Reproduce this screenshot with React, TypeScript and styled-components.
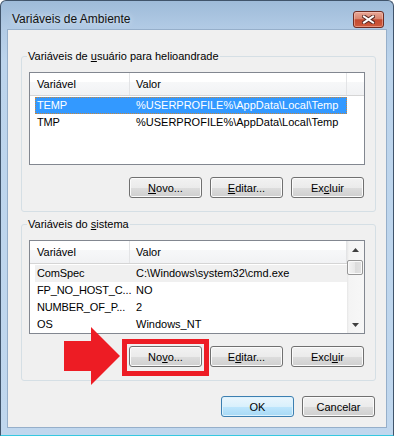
import styled, { createGlobalStyle } from "styled-components";

const GlobalStyle = createGlobalStyle`
  html, body {
    margin: 0;
    padding: 0;
    background: #ffffff;
  }
  body {
    font-family: "Liberation Sans", Arial, sans-serif;
    font-size: 11px;
    color: #000;
  }
  * {
    box-sizing: border-box;
  }
`;

type Row = { name: string; value: string; state?: "focused" | "selected" };

const userVars: Row[] = [
  { name: "TEMP", value: "%USERPROFILE%\\AppData\\Local\\Temp", state: "focused" },
  { name: "TMP", value: "%USERPROFILE%\\AppData\\Local\\Temp" },
];

const systemVars: Row[] = [
  { name: "ComSpec", value: "C:\\Windows\\system32\\cmd.exe", state: "selected" },
  { name: "FP_NO_HOST_C...", value: "NO" },
  { name: "NUMBER_OF_P...", value: "2" },
  { name: "OS", value: "Windows_NT" },
];

const App = () => {
  return (
    <Page>
      <GlobalStyle />
      <Window>
        <TitleBar>
          <Caption>Variáveis de Ambiente</Caption>
          <CloseButton>
            <svg width="13" height="9" viewBox="0 0 13 9">
              <path d="M2 1.5 L11 7.5 M11 1.5 L2 7.5" stroke="#5a2a24" strokeWidth="4" strokeLinecap="square" />
              <path d="M2 1.5 L11 7.5 M11 1.5 L2 7.5" stroke="#ffffff" strokeWidth="2" strokeLinecap="square" />
            </svg>
          </CloseButton>
        </TitleBar>
        <Client>
          <GroupBox $top={19}>
            <Legend>
              Variáveis de <Key>u</Key>suário para helioandrade
            </Legend>
            <ListView $height={93}>
              <ListBody>
                <HeaderRow>
                  <HeaderCell>Variável</HeaderCell>
                  <HeaderCell>Valor</HeaderCell>
                  <HeaderFiller />
                </HeaderRow>
                {userVars.map((r) => (
                  <ItemRow key={r.name} $state={r.state}>
                    <NameCell>{r.name}</NameCell>
                    <ValueCell>{r.value}</ValueCell>
                  </ItemRow>
                ))}
              </ListBody>
            </ListView>
            <ButtonRow>
              <Button>
                <Key>N</Key>ovo...
              </Button>
              <Button>
                <Key>E</Key>ditar...
              </Button>
              <Button>
                Ex<Key>c</Key>luir
              </Button>
            </ButtonRow>
          </GroupBox>

          <GroupBox $top={5}>
            <Legend>
              Variáveis do <Key>s</Key>istema
            </Legend>
            <ListView $height={94}>
              <ListBody>
                <HeaderRow>
                  <HeaderCell>Variável</HeaderCell>
                  <HeaderCell>Valor</HeaderCell>
                </HeaderRow>
                {systemVars.map((r) => (
                  <ItemRow key={r.name} $state={r.state}>
                    <NameCell>{r.name}</NameCell>
                    <ValueCell>{r.value}</ValueCell>
                  </ItemRow>
                ))}
              </ListBody>
              <ScrollBar>
                <ArrowButton>
                  <svg width="7" height="4" viewBox="0 0 7 4">
                    <path d="M0 4 L3.5 0 L7 4 Z" fill="#404040" />
                  </svg>
                </ArrowButton>
                <Track>
                  <Thumb />
                </Track>
                <ArrowButton>
                  <svg width="7" height="4" viewBox="0 0 7 4">
                    <path d="M0 0 L3.5 4 L7 0 Z" fill="#404040" />
                  </svg>
                </ArrowButton>
              </ScrollBar>
            </ListView>
            <ButtonRow>
              <Button>
                No<Key>v</Key>o...
              </Button>
              <Button>
                E<Key>d</Key>itar...
              </Button>
              <Button>
                Excl<Key>u</Key>ir
              </Button>
            </ButtonRow>
          </GroupBox>

          <DialogButtons>
            <Button $primary>OK</Button>
            <Button>Cancelar</Button>
          </DialogButtons>
        </Client>
      </Window>

      <Annotation width="394" height="436" viewBox="0 0 394 436">
        <polygon points="64,341 91,341 91,327 120,356 91,385 91,371 64,371" fill="#ed1c24" />
        <rect x="124.5" y="341.5" width="82" height="32" fill="none" stroke="#ed1c24" strokeWidth="5" />
      </Annotation>
    </Page>
  );
};

export default App;

const Page = styled.div`
  position: relative;
  width: 394px;
  height: 436px;
`;

const Window = styled.div`
  width: 394px;
  height: 436px;
  display: flex;
  flex-direction: column;
  border: 1px solid #40546b;
  border-bottom-color: #35c8e0;
  border-radius: 6px 6px 0 0;
  background: linear-gradient(
    to bottom,
    #9ebbd9 0px,
    #b2cbe5 28px,
    #bcd4ec 60px,
    #c0d7ee 100%
  );
`;

const TitleBar = styled.div`
  flex: none;
  height: 28px;
  display: flex;
  align-items: center;
  justify-content: space-between;
  padding: 8px 9px 0 11px;
`;

const Caption = styled.span`
  font-size: 12px;
  color: #111;
  text-shadow: 0 0 6px rgba(255, 255, 255, 0.8);
`;

const CloseButton = styled.div`
  width: 31px;
  height: 17px;
  display: flex;
  align-items: center;
  justify-content: center;
  border: 1px solid #6e2c22;
  border-radius: 3px;
  background: linear-gradient(
    to bottom,
    #e8a898 0%,
    #d98670 45%,
    #c34a30 52%,
    #cf5a3c 100%
  );
  box-shadow: inset 0 0 0 1px rgba(255, 210, 200, 0.45);
`;

const Client = styled.div`
  flex: 1;
  margin: 0 6px 7px;
  border: 1px solid #96afca;
  background: #f0f0f0;
  display: flex;
  flex-direction: column;
`;

const GroupBox = styled.fieldset<{ $top: number }>`
  margin: ${(p) => p.$top}px 10px 0 13px;
  padding: 9px 10px 13px 7px;
  border: 1px solid #d5dfe5;
  border-radius: 3px;
  min-width: 0;
`;

const Legend = styled.legend`
  padding: 0 1px;
  margin-left: -2px;
  line-height: 14px;
  font-size: 11px;
`;

const Key = styled.span`
  text-decoration: underline;
`;

const ListView = styled.div<{ $height: number }>`
  height: ${(p) => p.$height}px;
  border: 1px solid #828790;
  background: #ffffff;
  display: flex;
  overflow: hidden;
`;

const ListBody = styled.div`
  flex: 1;
  display: flex;
  flex-direction: column;
`;

const HeaderRow = styled.div`
  height: 23px;
  display: grid;
  grid-template-columns: 100px 217px 1fr;
  border-bottom: 1px solid #d5d5d5;
  background: linear-gradient(
    to bottom,
    #ffffff 0%,
    #ffffff 40%,
    #f7f8f9 40%,
    #f1f2f4 100%
  );
  margin-bottom: 1px;
`;

const HeaderCell = styled.div`
  border-right: 1px solid #e3e4e6;
  padding-left: 7px;
  line-height: 22px;
  & + & {
    padding-left: 6px;
  }
`;

const HeaderFiller = styled.div``;

const ItemRow = styled.div<{ $state?: "focused" | "selected" }>`
  height: 17px;
  width: 312px;
  margin-left: 5px;
  display: grid;
  grid-template-columns: 95px 217px;
  line-height: 17px;
  white-space: nowrap;
  background: ${(p) =>
    p.$state === "focused"
      ? "#3399ff"
      : p.$state === "selected"
      ? "#f0f0f0"
      : "transparent"};
  color: ${(p) => (p.$state === "focused" ? "#ffffff" : "#000000")};
  outline: ${(p) => (p.$state === "focused" ? "1px dotted #c9863a" : "none")};
  outline-offset: -1px;
`;

const NameCell = styled.div`
  padding-left: 2px;
  letter-spacing: -0.15px;
  overflow: visible;
`;

const ValueCell = styled.div`
  padding-left: 6px;
  overflow: hidden;
`;

const ScrollBar = styled.div`
  flex: none;
  width: 17px;
  display: flex;
  flex-direction: column;
  background: linear-gradient(to right, #e6e6e6 0, #f4f4f4 2px, #f7f7f7 100%);
`;

const ArrowButton = styled.div`
  height: 17px;
  flex: none;
  display: flex;
  align-items: center;
  justify-content: center;
`;

const Track = styled.div`
  flex: 1;
  padding: 2px 1px 0 0;
`;

const Thumb = styled.div`
  height: 15px;
  border: 1px solid #979797;
  border-radius: 2px;
  background: linear-gradient(to right, #f4f4f4 0%, #e8e8e8 50%, #dcdcdc 51%, #e2e2e2 100%);
  box-shadow: inset 0 0 0 1px #fafafa;
`;

const ButtonRow = styled.div`
  display: flex;
  justify-content: flex-end;
  gap: 8px;
  margin: 12px 1px 0 0;
`;

const DialogButtons = styled.div`
  display: flex;
  justify-content: flex-end;
  gap: 8px;
  margin: 15px 11px 0 0;
`;

const Button = styled.div<{ $primary?: boolean }>`
  width: 73px;
  height: 21px;
  display: flex;
  align-items: center;
  justify-content: center;
  font-size: 11px;
  border-radius: 3px;
  border: 1px solid ${(p) => (p.$primary ? "#3c7fb1" : "#707070")};
  background: ${(p) =>
    p.$primary
      ? "linear-gradient(to bottom, #eaf6fd 0%, #d9f0fc 50%, #bee6fd 50%, #a7d9f5 100%)"
      : "linear-gradient(to bottom, #f2f2f2 0%, #ebebeb 50%, #dddddd 50%, #cfcfcf 100%)"};
  box-shadow: inset 0 0 0 1px ${(p) => (p.$primary ? "#dff2fc" : "#fbfbfb")};
`;

const Annotation = styled.svg`
  position: absolute;
  top: 0;
  left: 0;
  pointer-events: none;
`;
